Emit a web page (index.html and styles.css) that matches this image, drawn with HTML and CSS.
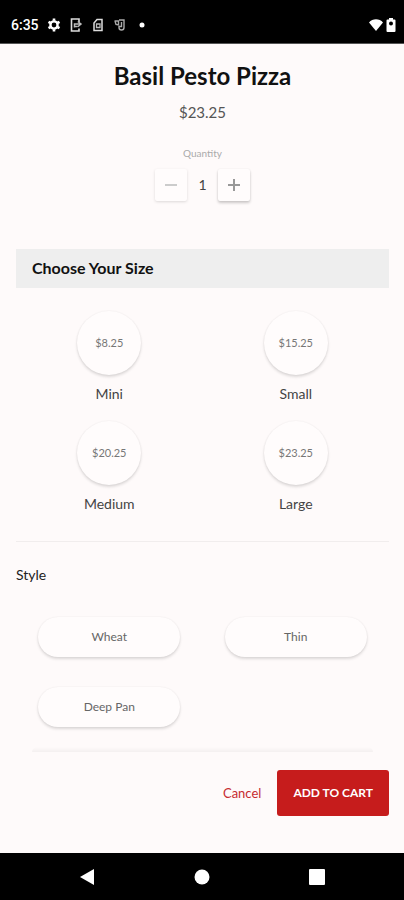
FILE: index.html
```
<!DOCTYPE html>
<html lang="en">
<head>
<meta charset="utf-8">
<meta name="viewport" content="width=device-width, initial-scale=1">
<title>Basil Pesto Pizza</title>
<link rel="stylesheet" href="styles.css">
</head>
<body>
<div class="status-bar">
  <span class="clock">6:35</span>
  <svg class="status-icon" viewBox="0 0 14 14" aria-hidden="true"><circle cx="7" cy="7" r="3.6" fill="none" stroke="#fff" stroke-width="2.4"/><path d="M7 .6v2.2M7 11.2v2.2M1.5 3.8l1.9 1.1M10.6 9.1l1.9 1.1M1.5 10.2l1.9-1.1M10.6 4.9l1.9-1.1" stroke="#fff" stroke-width="2.6"/></svg>
  <svg class="status-icon" viewBox="0 0 14 14" aria-hidden="true"><path d="M10 4V1H2.500v12H10v-2.500" fill="none" stroke="#ddd" stroke-width="1.600"/><path d="M5.500 9.500V6H11M8.800 3.500L12 6 8.800 8.800M5.500 8.500h3" fill="none" stroke="#bbb" stroke-width="1.500"/></svg>
  <svg class="status-icon" viewBox="0 0 14 14" aria-hidden="true"><path d="M6 1.500h5v11H3V5z" fill="none" stroke="#ddd" stroke-width="1.500"/><path d="M5.500 6h3.500v3.500H5.500z" fill="none" stroke="#bbb" stroke-width="1.300"/></svg>
  <svg class="status-icon" viewBox="0 0 14 14" aria-hidden="true"><path d="M6 2h5v7.500a2.500 2.500 0 0 1-5 0V8M1.500 3h4v4L3 6.500 2 3M8.500 4v4.500H6" fill="none" stroke="#aaa" stroke-width="1.400"/></svg>
  <svg class="status-icon" viewBox="0 0 14 14" aria-hidden="true"><circle cx="7" cy="7" r="2.500" fill="#fff"/></svg>
  <span class="status-right">
    <svg width="16" height="14" viewBox="0 0 16 14" aria-hidden="true"><path d="M1 4.500C4.500.300 11.500.300 15 4.500L8 13z" fill="#fff"/></svg>
    <svg width="10" height="16" viewBox="0 0 10 16" aria-hidden="true"><path d="M3 1h4v1.500h1.500q1 0 1 1V14q0 1-1 1h-7q-1 0-1-1V3.500q0-1 1-1H3z" fill="#fff"/><circle cx="5" cy="6.500" r="2" fill="#000"/></svg>
  </span>
</div>

<main class="product">
  <h1>Basil Pesto Pizza</h1>
  <p class="price">$23.25</p>
  <p class="quantity-label">Quantity</p>
  <div class="stepper">
    <button class="step step-off" type="button" aria-label="Decrease quantity"><svg width="14" height="14" viewBox="0 0 14 14"><path d="M1 7h12"/></svg></button>
    <output class="count">1</output>
    <button class="step" type="button" aria-label="Increase quantity"><svg width="14" height="14" viewBox="0 0 14 14"><path d="M1 7h12M7 1v12"/></svg></button>
  </div>

  <h2>Choose Your Size</h2>
  <div class="sizes">
    <div class="size"><button class="circle" type="button" aria-labelledby="mini">$8.25</button><span id="mini">Mini</span></div>
    <div class="size"><button class="circle" type="button" aria-labelledby="small">$15.25</button><span id="small">Small</span></div>
    <div class="size"><button class="circle" type="button" aria-labelledby="medium">$20.25</button><span id="medium">Medium</span></div>
    <div class="size"><button class="circle" type="button" aria-labelledby="large">$23.25</button><span id="large">Large</span></div>
  </div>

  <h3>Style</h3>
  <div class="styles">
    <button class="pill" type="button">Wheat</button>
    <button class="pill" type="button">Thin</button>
    <button class="pill" type="button">Deep Pan</button>
  </div>
  <div class="fold"></div>
</main>

<footer class="actions">
  <button class="cancel" type="button">Cancel</button>
  <button class="add" type="button">ADD TO CART</button>
</footer>

<nav class="nav-bar">
  <button type="button" aria-label="Back"><svg width="16" height="18" viewBox="0 0 16 18"><path d="M1 9L15 1v16z"/></svg></button>
  <button type="button" aria-label="Home"><svg width="16" height="16" viewBox="0 0 16 16"><circle cx="8" cy="8" r="7.500"/></svg></button>
  <button type="button" aria-label="Recent apps"><svg width="16" height="16" viewBox="0 0 16 16"><rect width="16" height="16" rx="1"/></svg></button>
</nav>
</body>
</html>
```
FILE: styles.css
```
* {
  box-sizing: border-box;
}

body {
  display: flex;
  flex-direction: column;
  min-height: 100vh;
  margin: 0;
  background: #fefafa;
  color: #222;
  font-family: Lato, "Liberation Sans", sans-serif;
  font-size: 14px;
  line-height: 20px;
}

button {
  padding: 0;
  border: 0;
  background: none;
  color: inherit;
  font: inherit;
}

svg {
  display: block;
}

h1, h2, h3, p {
  margin: 0;
}

.status-bar {
  display: flex;
  align-items: center;
  gap: 8px;
  padding: 15px 8px 8px 11px;
  border-bottom: 1px solid #555;
  background: #000;
  color: #fff;
}

.clock {
  font-family: Roboto, sans-serif;
  font-size: 14px;
  font-weight: 500;
}

.status-icon {
  width: 14px;
  height: 14px;
}

.status-right {
  display: flex;
  align-items: center;
  gap: 2px;
  margin-left: auto;
}

.product {
  flex: 1;
  display: flex;
  flex-direction: column;
  padding: 16px 15px 0 16px;
}

h1 {
  color: #111;
  font-size: 24px;
  font-weight: 700;
  line-height: 32px;
  text-align: center;
}

.price {
  margin-top: 10px;
  color: #555;
  font-size: 15px;
  text-align: center;
}

.quantity-label {
  margin-top: 21px;
  color: #aaa;
  font-size: 10px;
  text-align: center;
}

.stepper {
  display: flex;
  align-items: center;
  justify-content: center;
  margin-top: 6px;
}

.step {
  display: grid;
  place-items: center;
  width: 32px;
  height: 32px;
  border-radius: 2px;
  background: #fffcfc;
  box-shadow: 0 2px 3px #0003, 0 0 2px #0001;
}

.step-off {
  box-shadow: 0 1px 3px #0002;
}

.step path {
  stroke: #999;
  stroke-width: 2;
}

.step-off path {
  stroke: #ccc;
}

.count {
  width: 31px;
  color: #444;
  text-align: center;
}

h2 {
  margin-top: 48px;
  padding: 9px 16px 10px;
  background: #eee;
  color: #111;
  font-size: 16px;
  font-weight: 700;
}

.sizes {
  display: grid;
  grid-template-columns: 1fr 1fr;
  row-gap: 17px;
  padding: 23px 0 27px;
  border-bottom: 1px solid #f1eded;
}

.size {
  display: flex;
  flex-direction: column;
  align-items: center;
  gap: 9px;
  color: #444;
}

.circle {
  width: 64px;
  height: 64px;
  border-radius: 50%;
  background: #fffcfc;
  box-shadow: 0 2px 3px #0002, 0 0 2px #0001;
  color: #777;
  font-size: 11px;
}

h3 {
  margin-top: 23px;
  font-size: 14px;
  font-weight: 400;
}

.styles {
  display: grid;
  grid-template-columns: 1fr 1fr;
  justify-items: center;
  row-gap: 30px;
  margin-top: 32px;
}

.pill {
  width: 76%;
  height: 40px;
  border-radius: 20px;
  background: #fffcfc;
  box-shadow: 0 2px 3px #0002, 0 0 2px #0001;
  color: #666;
  font-size: 12px;
}

.fold {
  height: 5px;
  margin: 20px 16px 0;
  border-radius: 8px 8px 0 0;
  background: linear-gradient(#fefafa, #f4f0f0);
}

.actions {
  display: flex;
  align-items: center;
  justify-content: flex-end;
  gap: 16px;
  padding: 16px 15px 37px;
}

.cancel {
  color: #c62b30;
  font-size: 13px;
}

.add {
  height: 46px;
  padding: 0 16px;
  border-radius: 3px;
  background: #c61c1c;
  color: #fff;
  font-size: 12px;
  font-weight: 700;
}

.nav-bar {
  display: flex;
  align-items: center;
  justify-content: center;
  gap: 99px;
  height: 47px;
  background: #000;
}

.nav-bar svg {
  fill: #fff;
}
```
